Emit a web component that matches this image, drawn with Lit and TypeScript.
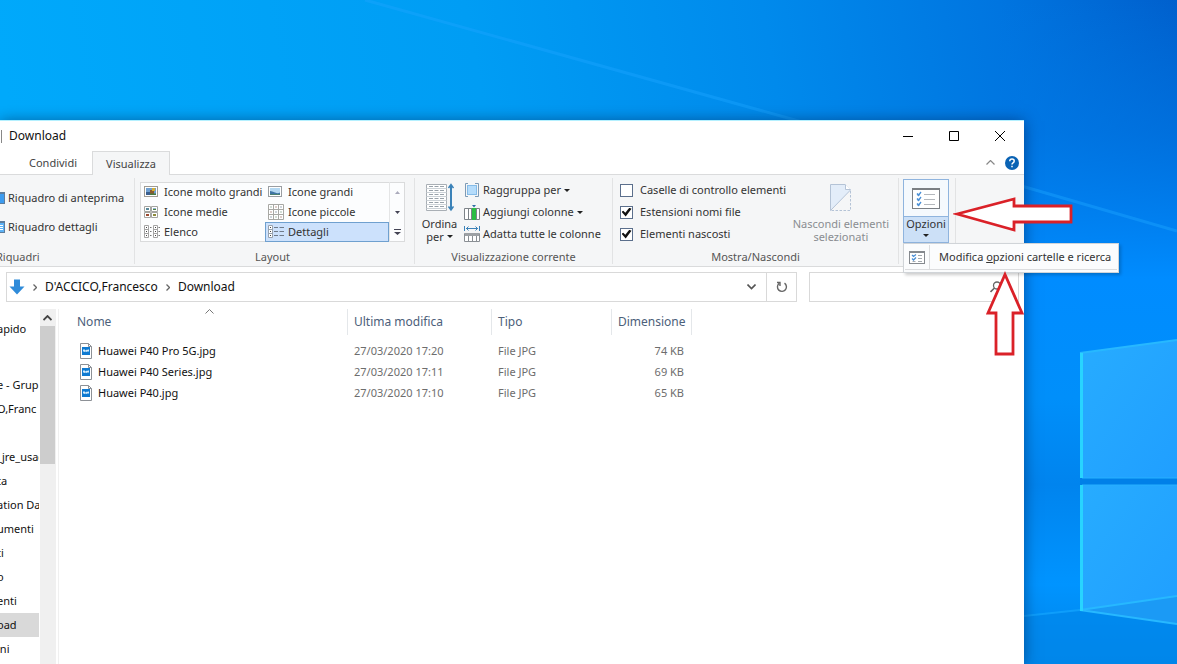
import { LitElement, html, css, svg, nothing } from "lit";
import { customElement, state } from "lit/decorators.js";
import { classMap } from "lit/directives/class-map.js";

const caret = html`<svg class="caret" width="6" height="3" viewBox="0 0 6 3" aria-hidden="true"><path d="M0 0h6L3 3z" fill="#222" /></svg>`;

const galleryIcons: Record<string, unknown> = {
  huge: svg`<rect x="0.500" y="2.500" width="13" height="10" fill="#fff" stroke="#a09c94"/><rect x="2" y="4" width="10" height="7" fill="#6f9fd0"/><path d="M2 8h4v3H2z" fill="#3a5f8f"/><path d="M6 6h4v4H6z" fill="#8a5a2e"/><path d="M8 4h3v3H8z" fill="#d8b032"/><path d="M6 9.500h6V11H6z" fill="#4a7a3d"/>`,
  large: svg`<rect x="0.500" y="2.500" width="13" height="10" fill="#fff" stroke="#9a9ea2"/><rect x="2" y="4" width="10" height="7" fill="#b4d8f2"/><path d="M2 7q2 0 5 1.500t5 0V11H2z" fill="#3e74a4"/><path d="M2 10h10v1H2z" fill="#4a8070"/>`,
  medium: svg`<path d="M.5 2.500h6v5h-6zM7.500 2.500h6v5h-6zM.5 8.500h6v5h-6zM7.500 8.500h6v5h-6z" fill="#fff" stroke="#a4a4a0"/><path d="M2 4h3v2H2z" fill="#5a8a9c"/><path d="M9 4h3v1H9z" fill="#8fb0d0"/><path d="M9 5h3v1H9z" fill="#4c8540"/><path d="M2 10h3v2H2z" fill="#9c4a30"/><path d="M9 10h3v2H9z" fill="#8d8a3a"/>`,
  small: svg`<path d="M.5 .5h15v15H.5zM5.500 .5v15M10.500 .5v15M.5 5.500h15M.5 10.500h15" fill="#fff" stroke="#a8a8a4"/><path d="M2.500 2.500h1v1h-1zM12.500 7.500h1v1h-1zM7.500 12.500h1v1h-1z" fill="#4a7a58"/><path d="M7.500 2.500h1v1h-1zM2.500 7.500h1v1h-1zM12.500 12.500h1v1h-1z" fill="#7a3b2a"/><path d="M12.500 2.500h1v1h-1zM7.500 7.500h1v1h-1zM2.500 12.500h1v1h-1z" fill="#3a5570"/>`,
  list: svg`<path d="M.5 1.500h4v12h-4zM9.500 1.500h4v12h-4zM.5 5.500h4M.5 9.500h4M9.500 5.500h4M9.500 9.500h4" fill="#fff" stroke="#a4a4a4"/><path d="M6 3.500h1.500M6 7.500h1.500M6 11.500h1.500M14.500 3.500H16M14.500 7.500H16M14.500 11.500H16" stroke="#777"/><path d="M2 3h1v1H2zM2 7h1v1H2zM2 11h1v1H2zM11 3h1v1h-1zM11 7h1v1h-1zM11 11h1v1h-1z" fill="#444"/>`,
  details: svg`<path d="M.5 1.500h4v12h-4zM.5 5.500h4M.5 9.500h4" fill="#fff" stroke="#98a2ae"/><path d="M6 3.500h4M11.500 3.500H16M6 7.500h4M11.500 7.500H16M6 11.500h4M11.500 11.500H16" stroke="#6f7b8a"/><path d="M2 3h1v1H2zM2 7h1v1H2zM2 11h1v1H2z" fill="#444"/>`,
};

const layouts = [
  { id: "huge", label: "Icone molto grandi" },
  { id: "large", label: "Icone grandi" },
  { id: "medium", label: "Icone medie" },
  { id: "small", label: "Icone piccole" },
  { id: "list", label: "Elenco" },
  { id: "details", label: "Dettagli" },
];

const files = [
  { name: "Huawei P40 Pro 5G.jpg", date: "27/03/2020 17:20", type: "File JPG", size: "74 KB" },
  { name: "Huawei P40 Series.jpg", date: "27/03/2020 17:11", type: "File JPG", size: "69 KB" },
  { name: "Huawei P40.jpg", date: "27/03/2020 17:10", type: "File JPG", size: "65 KB" },
];

const treeGroups = [
  ["apido"],
  ["", "e - Grup", "O,Franc", "", "_jre_usag", "ta", "ation Da", "umenti", "ti", "o", "enti", "oad", "ini"],
];

@customElement("desktop-wallpaper")
export class DesktopWallpaper extends LitElement {
  static styles = css`
    :host { display: block; }
    .art { display: block; width: 100%; height: 100%; }
  `;

  render() {
    return html`<svg class="art" viewBox="0 0 1177 664" preserveAspectRatio="xMaxYMin slice" aria-hidden="true">
      <defs>
        <linearGradient id="sky" x1="0" y1="0.1" x2="1" y2="0">
          <stop offset="0" stop-color="#00a9fb" />
          <stop offset="0.4" stop-color="#009df4" />
          <stop offset="0.65" stop-color="#008aec" />
          <stop offset="0.85" stop-color="#0075e0" />
          <stop offset="1" stop-color="#0060cd" />
        </linearGradient>
        <linearGradient id="side" x1="0" y1="0" x2="0" y2="1">
          <stop offset="0" stop-color="#0078e4" stop-opacity="0" />
          <stop offset="0.2" stop-color="#0078e6" stop-opacity="0.6" />
          <stop offset="0.42" stop-color="#008cff" />
          <stop offset="0.6" stop-color="#008ffa" />
          <stop offset="0.73" stop-color="#0084ee" />
          <stop offset="0.88" stop-color="#0094ff" />
          <stop offset="1" stop-color="#0083e6" />
        </linearGradient>
        <linearGradient id="pane" x1="0" y1="0" x2="1" y2="1">
          <stop offset="0" stop-color="#27acff" />
          <stop offset="1" stop-color="#209fff" />
        </linearGradient>
      </defs>
      <rect width="1177" height="664" fill="url(#sky)" />
      <rect x="1000" width="177" height="664" fill="url(#side)" />
      <path d="M365 0L795 120L1025 187L1177 231" stroke="#1aa5ff" stroke-width="3" opacity="0.45" fill="none" />
      <path d="M1024 616L1080 610L1177 624V664H1024z" fill="#0087eb" opacity="0.7" />
      <path d="M1024 616L1080 610" stroke="#14a6ff" stroke-width="2" opacity="0.7" />
      <path d="M1080 478h97v7h-97z" fill="#0080e8" />
      <path d="M1080 353L1177 340V478H1080z" fill="url(#pane)" />
      <path d="M1080 485H1177V624L1080 610z" fill="url(#pane)" />
      <path d="M1080 610L1177 596V624z" fill="#1b9af5" />
      <path d="M1080 353L1177 340M1080 610L1177 624M1080 610L1177 596" stroke="#27b8ff" stroke-width="2" fill="none" />
      <path d="M1082 478H1177M1082 485H1177" stroke="#27b0ff" />
      <path d="M1081.500 353V478M1081.500 485V611" stroke="#28d4ff" stroke-width="3" />
    </svg>`;
  }
}

@customElement("app-root")
export class AppRoot extends LitElement {
  @state() private layout = "details";

  static styles = css`
    :host {
      display: block;
      font-family: "Noto Sans", "Open Sans", sans-serif;
      font-size: 11px;
      line-height: 14px;
      color: #333;
    }
    * { box-sizing: border-box; }
    svg { display: block; flex: none; }
    button, input { font: inherit; color: inherit; margin: 0; }
    button { padding: 0; border: 0; background: none; text-align: left; white-space: nowrap; }
    .desktop {
      position: relative;
      display: flex;
      height: 100vh;
      padding: 120px 13% 0 0;
      overflow: hidden;
    }
    .wallpaper { position: absolute; inset: 0; }
    .window {
      position: relative;
      flex: 1;
      min-width: 0;
      display: flex;
      flex-direction: column;
      background: #fff;
      border-top: 1px solid #b4f0ff;
      box-shadow: 0 1px 14px rgba(0, 20, 60, 0.5);
    }

    .titlebar { display: flex; align-items: center; height: 30px; padding-right: 1px; color: #111; }
    .title-sep { width: 2px; height: 13px; border-right: 1px solid #888; }
    .title { flex: 1; margin: 0; padding-left: 7px; font-size: 12px; font-weight: 400; }
    .win-btn { display: grid; place-items: center; width: 46px; height: 30px; }
    .win-btns { display: flex; }

    .tabs { display: flex; height: 24px; border-bottom: 1px solid #dadbdc; color: #444; }
    .tab { height: 24px; padding: 0 15px; }
    .tab-share { margin-left: 14px; }
    .tab-active {
      padding: 0 13px;
      background: #f5f6f7;
      border: 1px solid #dadbdc;
      border-bottom: 0;
    }
    .tab-tools { display: flex; align-items: center; gap: 10px; margin-left: auto; padding-right: 5px; }

    .ribbon { display: flex; height: 92px; padding: 3px 0 2px; background: #f5f6f7; border-bottom: 1px solid #dadbdc; }
    .group { display: flex; flex-direction: column; border-right: 1px solid #e2e3e4; }
    .group-body { display: flex; flex: 1; }
    .caption { height: 14px; text-align: center; color: #555; }
    .g-panes { width: 135px; }
    .g-panes .group-body { flex-direction: column; padding-top: 5px; }
    .g-panes .caption { text-align: left; text-indent: -4px; overflow: hidden; }
    .pane-btn { display: flex; align-items: center; gap: 3px; height: 29px; }
    .g-layout { width: 280px; padding: 0 9px 0 5px; }
    .g-layout .group-body { padding-top: 4px; align-items: flex-start; }
    .gallery {
      display: grid;
      flex: 1;
      grid-template-columns: 125px 124px 1fr;
      grid-template-rows: 20px 20px 20px;
      background: #fcfdfe;
      box-shadow: inset 0 0 0 1px #dadbdc;
    }
    .cell { display: flex; align-items: center; gap: 4px; padding-left: 3px; border: 1px solid transparent; }
    .cell.selected { background: #cce1fc; border-color: #6fa0cf; }
    .cell:nth-child(2n) { padding-left: 2px; }
    .gallery-nav {
      grid-column: 3;
      grid-row: 1 / 4;
      display: grid;
      grid-template-rows: 20px 20px 20px;
      border-left: 1px solid #e4e5e6;
    }
    .nav-btn { display: grid; place-items: center; }
    .g-view { width: 198px; }
    .tall { display: flex; flex-direction: column; align-items: center; gap: 5px; padding-top: 5px; line-height: 13px; text-align: center; }
    .tall-sort { width: 49px; }
    .inline { display: flex; align-items: center; justify-content: center; gap: 3px; }
    .stack { display: flex; flex-direction: column; padding-top: 1px; }
    .row { display: flex; align-items: center; gap: 3px; height: 22px; }
    .g-show { width: 286px; }
    .g-show .group-body { padding-left: 7px; }
    .check { display: flex; align-items: center; gap: 7px; height: 22px; }
    .box {
      appearance: none;
      display: grid;
      place-items: center;
      width: 13px;
      height: 13px;
      border: 1px solid #5b6f8c;
      background: #fff;
    }
    .box:checked::after {
      content: "";
      width: 10px;
      height: 9px;
      background: #111;
      clip-path: polygon(0 48%, 18% 36%, 38% 58%, 78% 4%, 100% 14%, 42% 100%);
    }
    .tall-hide { margin-left: auto; padding-right: 9px; color: #8a8d91; }
    .g-options { width: 57px; padding-left: 4px; }
    .options {
      display: flex;
      flex-direction: column;
      width: 46px;
      height: 64px;
      margin-top: 1px;
      border: 1px solid #8fb4de;
      background: #f5f9fd;
      text-align: center;
    }
    .options-icon { display: grid; place-items: center; height: 36px; }
    .options-label {
      display: flex;
      flex: 1;
      flex-direction: column;
      align-items: center;
      gap: 3px;
      background: #cce0f7;
      border-top: 1px solid #8fb4de;
    }
    .menu {
      position: absolute;
      top: 122px;
      left: calc(100% - 121px);
      z-index: 2;
      width: max-content;
      height: 30px;
      padding: 1px;
      background: #fbfcfd;
      border: 1px solid #d0d4d8;
      box-shadow: 2px 2px 3px rgba(0, 0, 0, 0.2);
    }
    .menu-item { display: flex; align-items: center; height: 25px; border-bottom: 1px solid #dcdddf; color: #333; }
    .menu-icon { display: grid; place-items: center; width: 25px; height: 25px; border-right: 1px solid #dcdddf; }
    .menu-text { padding: 0 6px 0 9px; }

    .nav { display: flex; gap: 12px; height: 42px; padding: 5px 5px 7px 6px; font-size: 12px; color: #111; }
    .address { display: flex; flex: 1; align-items: center; border: 1px solid #d9d9d9; }
    .crumbs { display: flex; flex: 1; align-items: center; gap: 8px; padding-left: 2px; }
    .crumb { color: inherit; text-decoration: none; }
    .drop { display: grid; place-items: center; width: 30px; height: 28px; }
    .refresh { border-left: 1px solid #d9d9d9; }
    .search { display: flex; align-items: center; width: 210px; padding-right: 12px; border: 1px solid #d9d9d9; }
    .search-input { flex: 1; min-width: 0; border: 0; outline: 0; background: none; }

    .content { display: flex; flex: 1; min-height: 0; color: #111; }
    .tree { width: 40px; margin: 0; padding: 8px 1px 0 0; overflow: hidden; }
    .tree-group { margin: 0 0 8px; padding: 0; list-style: none; }
    .tree-item { display: block; height: 24px; line-height: 24px; text-indent: -3px; color: inherit; text-decoration: none; white-space: nowrap; overflow: hidden; }
    .tree-item.current { background: #d9d9d9; }
    .scroll { display: flex; flex-direction: column; width: 16px; padding-right: 1px; background: #f0f0f0; }
    .scroll-up { display: grid; place-items: center; height: 17px; }
    .thumb { height: 138px; background: #cdcdcd; }
    .files { flex: 1; margin-left: 2px; padding-left: 12px; border-left: 1px solid #f0f0f0; overflow: hidden; }
    .table { table-layout: fixed; width: 621px; border-collapse: separate; border-spacing: 0; }
    .c-name { width: 277px; }
    .c-date { width: 144px; }
    .c-type { width: 120px; }
    .c-size { width: 80px; }
    .table th {
      height: 26px;
      padding: 0 6px 5px;
      border-right: 1px solid #e4e7ea;
      vertical-align: bottom;
      text-align: left;
      font-size: 12px;
      font-weight: 400;
      line-height: 16px;
      color: #4c607a;
      white-space: nowrap;
    }
    .sort { margin: 0 auto; }
    .table td { height: 21px; padding: 0 6px; color: #6d6d6d; white-space: nowrap; }
    .table .spacer td { height: 5px; padding: 0; }
    .file { display: flex; align-items: center; gap: 6px; padding-left: 3px; color: #111; }
    .table .size { padding-right: 8px; text-align: right; }

    .arrow { position: absolute; z-index: 3; }
    .arrow-left { top: 75px; left: calc(100% - 71px); }
    .arrow-up { top: 150px; left: calc(100% - 39px); }
  `;

  private optionsIcon(w: number, h: number) {
    return html`<svg width=${w} height=${h} viewBox="0 0 28 21" aria-hidden="true">
      <rect x="0.500" y="0.500" width="27" height="20" fill="#fff" stroke="#7b7f84" />
      <path d="M0 0h28v2H0z" fill="#7b7f84" />
      <path d="M5 5h3v3H5zM5 10h3v3H5zM5 15h3v3H5z" fill="#cfe3f6" />
      <path d="M5 5.500l1.500 2 2.500-3.500M5 10.500l1.500 2 2.500-3.500M5 15.500l1.500 2 2.500-3.500" fill="none" stroke="#4a8fd6" stroke-width="1.300" />
      <path d="M12 6.500h11M12 11.500h11M12 16.500h11" stroke="#b4b8bd" />
    </svg>`;
  }

  private menuIcon() {
    return html`<svg width="16" height="13" viewBox="0 0 16 13" aria-hidden="true">
      <rect x="0.500" y="0.500" width="15" height="12" fill="#fff" stroke="#85898e" />
      <path d="M0 0h16v2H0z" fill="#85898e" />
      <path d="M3 4l1.500 1.500L7 3.500M3 7.500L4.500 9 7 6.500" fill="none" stroke="#4a8fd6" stroke-width="1.300" />
      <path d="M9 4.500h4M9 7.500h4M9 10.500h4M3.500 10.500h3" stroke="#a4a9ae" />
    </svg>`;
  }

  private renderRibbon() {
    return html`<div class="ribbon">
      <section class="group g-panes">
        <div class="group-body">
          <button class="pane-btn">
            <svg width="5" height="12" viewBox="0 0 5 12"><path d="M0 0h5v12H0z" fill="#5e7d9c" /><path d="M0 2h4v9H0z" fill="#3d9cf0" /></svg>
            Riquadro di anteprima
          </button>
          <button class="pane-btn">
            <svg width="5" height="12" viewBox="0 0 5 12"><path d="M0 0h5v12H0z" fill="#5e7d9c" /><path d="M0 2h4v9H0z" fill="#5db2f5" /><path d="M0 4.500h3M0 6.500h3M0 8.500h3" stroke="#fff" /></svg>
            Riquadro dettagli
          </button>
        </div>
        <div class="caption">Riquadri</div>
      </section>

      <section class="group g-layout">
        <div class="group-body">
          <div class="gallery">
            ${layouts.map(
              (l) => html`<button
                class=${classMap({ cell: true, selected: this.layout === l.id })}
                @click=${() => (this.layout = l.id)}
              >
                <svg width="16" height="16" viewBox="0 0 16 16" aria-hidden="true">${galleryIcons[l.id]}</svg>${l.label}
              </button>`
            )}
            <div class="gallery-nav">
              <button class="nav-btn" aria-label="Su"><svg width="5" height="3" viewBox="0 0 5 3"><path d="M0 3h5L2.500 0z" fill="#aab" /></svg></button>
              <button class="nav-btn" aria-label="Giù"><svg width="5" height="3" viewBox="0 0 5 3"><path d="M0 0h5L2.500 3z" fill="#445" /></svg></button>
              <button class="nav-btn" aria-label="Altro"><svg width="7" height="7" viewBox="0 0 7 7"><path d="M0 0h7v1H0zM0 3h7L3.500 6z" fill="#445" /></svg></button>
            </div>
          </div>
        </div>
        <div class="caption">Layout</div>
      </section>

      <section class="group g-view">
        <div class="group-body">
          <button class="tall tall-sort">
            <svg width="28" height="29" viewBox="0 0 28 29" aria-hidden="true">
              <path d="M.5 1.500h20v26H.5z" fill="#fff" stroke="#a9afb5" />
              <path d="M.5 5.500h20M.5 9.500h20M.5 13.500h20M.5 17.500h20M.5 21.500h20M.5 25.500h20" stroke="#ccd2d7" />
              <path d="M3 3.500h15M3 7.500h15M3 11.500h15M3 15.500h15M3 19.500h15M3 23.500h15" stroke="#98a1a9" stroke-dasharray="4 1.500" />
              <path d="M25 2v24" stroke="#3b82b8" stroke-width="2" />
              <path d="M22.500 5L25 1.500 27.500 5M22.500 23.500L25 27l2.500-3.500" fill="none" stroke="#3b82b8" stroke-width="1.500" />
            </svg>
            <span>Ordina<span class="inline">per ${caret}</span></span>
          </button>
          <div class="stack">
            <button class="row">
              <svg width="16" height="16" viewBox="0 0 16 16" aria-hidden="true"><path d="M4 1.500H1.500v13H4M11 1.500h3.500v13H11" fill="none" stroke="#7d9ab5" /><rect x="3.500" y="3.500" width="9" height="9" fill="#b5dcfb" stroke="#86bce8" /></svg>
              Raggruppa per ${caret}
            </button>
            <button class="row">
              <svg width="16" height="16" viewBox="0 0 16 16" aria-hidden="true"><path d="M.5 4.500h15v11H.5zM4.500 4.500v11" fill="#fff" stroke="#7d8388" /><path d="M8 4h4v12H8z" fill="#2bbd43" /><path d="M7.500 4v12M12.500 4v12" stroke="#7d8388" /><path d="M8 1h4l-2 2.500z" fill="#2f6fa5" /></svg>
              Aggiungi colonne ${caret}
            </button>
            <button class="row">
              <svg width="16" height="16" viewBox="0 0 16 16" aria-hidden="true"><path d="M.5 0v5M15.500 0v5M2 2.500h12M4.500 .5l-2 2 2 2M11.500 .5l2 2-2 2" fill="none" stroke="#3b82b8" /><path d="M.5 7.500h15v8H.5z" fill="#fff" stroke="#8a8f94" /><path d="M1 7h14v3H1z" fill="#9da1a5" /><path d="M4.500 10v5M8.500 10v5M12.500 10v5" stroke="#8a8f94" /></svg>
              Adatta tutte le colonne
            </button>
          </div>
        </div>
        <div class="caption">Visualizzazione corrente</div>
      </section>

      <section class="group g-show">
        <div class="group-body">
          <div class="stack">
            <label class="check"><input class="box" type="checkbox" />Caselle di controllo elementi</label>
            <label class="check"><input class="box" type="checkbox" checked />Estensioni nomi file</label>
            <label class="check"><input class="box" type="checkbox" checked />Elementi nascosti</label>
          </div>
          <button class="tall tall-hide" disabled>
            <svg width="22" height="29" viewBox="0 0 22 29" aria-hidden="true">
              <path d="M.5 1.500H15L20.500 7 .5 27.500z" fill="#e3edf9" stroke="#b4c3d6" />
              <path d="M15.500 1.500v5h5" fill="#fff" stroke="#b4c3d6" />
              <path d="M20.500 8v19.500H1" fill="none" stroke="#b4c3d6" stroke-dasharray="2.500 1.500" />
            </svg>
            <span>Nascondi elementi<br />selezionati</span>
          </button>
        </div>
        <div class="caption">Mostra/Nascondi</div>
      </section>

      <section class="group g-options">
        <button class="options">
          <span class="options-icon">${this.optionsIcon(28, 21)}</span>
          <span class="options-label">Opzioni ${caret}</span>
        </button>
      </section>
    </div>`;
  }

  private renderFiles() {
    return html`<div class="files">
      <table class="table">
        <colgroup><col class="c-name" /><col class="c-date" /><col class="c-type" /><col class="c-size" /></colgroup>
        <thead>
          <tr>
            <th>
              <svg class="sort" width="9" height="5" viewBox="0 0 9 5" aria-hidden="true"><path d="M.5 4.500l4-4 4 4" fill="none" stroke="#777" /></svg>Nome
            </th>
            <th>Ultima modifica</th>
            <th>Tipo</th>
            <th>Dimensione</th>
          </tr>
        </thead>
        <tbody>
          <tr class="spacer"><td colspan="4"></td></tr>
          ${files.map(
            (f) => html`<tr>
              <td>
                <span class="file">
                  <svg width="12" height="16" viewBox="0 0 12 16" aria-hidden="true">
                    <path d="M.5 .5h8l3 3v12H.5z" fill="#fff" stroke="#8d9196" />
                    <path d="M8.500 .5v3h3" fill="none" stroke="#8d9196" />
                    <path d="M2 4h8v8H2z" fill="#0f7ad1" />
                    <path d="M3 7l1-1 1.500 1.500L7 6.500 8 7l1-1v3L8 8 7 9 5.500 8.500 4 9 3 8z" fill="#d6ecfb" />
                  </svg>
                  ${f.name}
                </span>
              </td>
              <td>${f.date}</td>
              <td>${f.type}</td>
              <td class="size">${f.size}</td>
            </tr>`
          )}
        </tbody>
      </table>
    </div>`;
  }

  render() {
    const chevron = html`<svg width="4" height="7" viewBox="0 0 4 7" aria-hidden="true"><path d="M.5 .5l3 3-3 3" fill="none" stroke="#666" stroke-width="1.300" /></svg>`;
    return html`<main class="desktop">
      <desktop-wallpaper class="wallpaper"></desktop-wallpaper>
      <div class="window">
        <header class="titlebar">
          <span class="title-sep"></span>
          <h1 class="title">Download</h1>
          <div class="win-btns">
            <button class="win-btn" aria-label="Riduci a icona"><svg width="10" height="10" viewBox="0 0 10 10"><path d="M0 5.500h10" stroke="#000" /></svg></button>
            <button class="win-btn" aria-label="Ingrandisci"><svg width="10" height="10" viewBox="0 0 10 10"><path d="M.5 .5h9v9h-9z" fill="none" stroke="#000" /></svg></button>
            <button class="win-btn" aria-label="Chiudi"><svg width="10" height="10" viewBox="0 0 10 10"><path d="M0 0l10 10M10 0L0 10" stroke="#000" /></svg></button>
          </div>
        </header>
        <nav class="tabs">
          <button class="tab tab-share">Condividi</button>
          <button class="tab tab-active">Visualizza</button>
          <div class="tab-tools">
            <button aria-label="Riduci barra multifunzione"><svg width="9" height="5" viewBox="0 0 9 5"><path d="M.5 4.500l4-4 4 4" fill="none" stroke="#888" stroke-width="1.200" /></svg></button>
            <button aria-label="Guida"><svg width="14" height="14" viewBox="0 0 14 14"><circle cx="7" cy="7" r="7" fill="#0a63b4" /><path d="M4.800 5.200q0-2.200 2.200-2.200t2.200 2q0 1.200-1.200 1.900-1 .6-1 1.700M7 9.800v1.500" fill="none" stroke="#fff" stroke-width="1.500" /></svg></button>
          </div>
        </nav>
        ${this.renderRibbon()}
        <div class="nav">
          <div class="address">
            <div class="crumbs">
              <svg width="16" height="16" viewBox="0 0 16 16" aria-hidden="true"><path d="M5 .5h6v7h4.500L8 15.500.5 7.500H5z" fill="#2f8bd9" /></svg>
              ${chevron}<a class="crumb" href="#utente">D'ACCICO,Francesco</a>${chevron}<a class="crumb" href="#download">Download</a>
            </div>
            <button class="drop" aria-label="Percorsi recenti"><svg width="9" height="6" viewBox="0 0 9 6"><path d="M.5 .5l4 4 4-4" fill="none" stroke="#555" stroke-width="1.600" /></svg></button>
            <button class="drop refresh" aria-label="Aggiorna"><svg width="12" height="12" viewBox="0 0 12 12"><path d="M3 2.500A4.500 4.500 0 1 0 8.500 2.200M1 1.500h3v3.500" fill="none" stroke="#666" stroke-width="1.400" /></svg></button>
          </div>
          <label class="search">
            <input class="search-input" type="search" aria-label="Cerca" />
            <svg width="16" height="12" viewBox="0 0 16 12" aria-hidden="true"><circle cx="7" cy="4.500" r="3.500" fill="none" stroke="#666" stroke-width="1.300" /><path d="M4.500 7L.5 11" stroke="#666" stroke-width="1.600" /></svg>
          </label>
        </div>
        <div class="content">
          <nav class="tree">
            ${treeGroups.map(
              (g) => html`<ul class="tree-group">
                ${g.map(
                  (t) => html`<li>
                    <a class=${classMap({ "tree-item": true, current: t === "oad" })} href=${t ? "#tree" : nothing}>${t}</a>
                  </li>`
                )}
              </ul>`
            )}
          </nav>
          <div class="scroll">
            <button class="scroll-up" aria-label="Scorri su"><svg width="9" height="6" viewBox="0 0 9 6"><path d="M.5 5l4-4 4 4" fill="none" stroke="#444" stroke-width="1.800" /></svg></button>
            <div class="thumb"></div>
          </div>
          ${this.renderFiles()}
        </div>

        <div class="menu" role="menu">
          <button class="menu-item" role="menuitem">
            <span class="menu-icon">${this.menuIcon()}</span>
            <span class="menu-text">Modifica <u>o</u>pzioni cartelle e ricerca</span>
          </button>
        </div>
        <svg class="arrow arrow-left" width="120" height="38" viewBox="0 0 120 38" aria-hidden="true">
          <path d="M4 18L61 3V10H118V26H61V34z" fill="#fff" stroke="#da2128" stroke-width="2.800" />
        </svg>
        <svg class="arrow arrow-up" width="40" height="86" viewBox="0 0 40 86" aria-hidden="true">
          <path d="M20 3.500L37 42H28V83H11V42H3z" fill="#fff" stroke="#da2128" stroke-width="2.800" />
        </svg>
      </div>
    </main>`;
  }
}
